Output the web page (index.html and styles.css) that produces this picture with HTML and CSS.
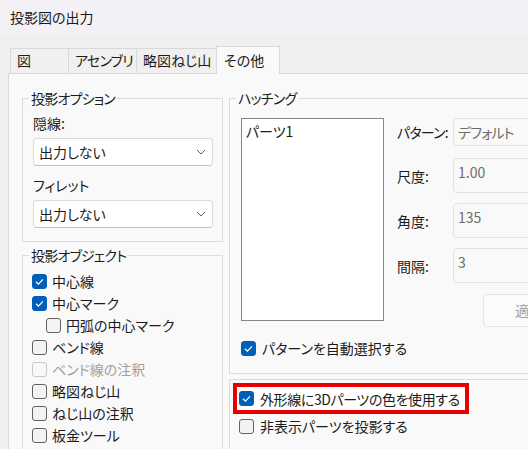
FILE: index.html
```html
<!DOCTYPE html>
<html lang="ja">
<head>
<meta charset="utf-8">
<title>投影図の出力</title>
<link rel="stylesheet" href="styles.css">
</head>
<body>
<div class="titlebar">投影図の出力</div>
<div class="tabs">
  <div class="tab t1">図</div>
  <div class="tab t2 kana">アセンブリ</div>
  <div class="tab t3">略図ねじ山</div>
  <div class="tab active">その他</div>
</div>
<div class="panel">
  <div class="col-left">
    <fieldset class="group g-opts">
      <legend class="kana">投影オプション</legend>
      <div class="label">隠線:</div>
      <div class="select"><span>出力しない</span><svg class="chev" width="10" height="6" viewBox="0 0 10 6"><path d="M1 1 L5 5 L9 1" fill="none" stroke="#5f5f5f" stroke-width="1"/></svg></div>
      <div class="label lbl2">フィレット</div>
      <div class="select"><span>出力しない</span><svg class="chev" width="10" height="6" viewBox="0 0 10 6"><path d="M1 1 L5 5 L9 1" fill="none" stroke="#5f5f5f" stroke-width="1"/></svg></div>
    </fieldset>
    <fieldset class="group g-objs">
      <legend class="kana">投影オブジェクト</legend>
      <div class="cb checked"><span class="box"><svg width="13" height="13" viewBox="0 0 13 13"><polyline points="3,6.8 5.4,9.1 10,4.4" fill="none" stroke="#fff" stroke-width="1.3"/></svg></span><span>中心線</span></div>
      <div class="cb checked"><span class="box"><svg width="13" height="13" viewBox="0 0 13 13"><polyline points="3,6.8 5.4,9.1 10,4.4" fill="none" stroke="#fff" stroke-width="1.3"/></svg></span><span>中心マーク</span></div>
      <div class="cb indent"><span class="box"></span><span>円弧の中心マーク</span></div>
      <div class="cb"><span class="box"></span><span>ベンド線</span></div>
      <div class="cb disabled"><span class="box"></span><span>ベンド線の注釈</span></div>
      <div class="cb"><span class="box"></span><span>略図ねじ山</span></div>
      <div class="cb"><span class="box"></span><span>ねじ山の注釈</span></div>
      <div class="cb"><span class="box"></span><span>板金ツール</span></div>
    </fieldset>
  </div>
  <div class="col-right">
    <fieldset class="group g-hatch">
      <legend class="kana">ハッチング</legend>
      <div class="hatch-body">
        <div class="listbox"><div>パーツ1</div></div>
        <div class="form">
          <div class="frow"><div class="flabel kana">パターン:</div><div class="combo kana">デフォルト</div></div>
          <div class="frow r2"><div class="flabel">尺度:</div><div class="edit">1.00</div></div>
          <div class="frow r3"><div class="flabel">角度:</div><div class="edit">135</div></div>
          <div class="frow r3"><div class="flabel">間隔:</div><div class="edit">3</div></div>
          <div class="btnrow"><div class="btn">適用</div></div>
        </div>
      </div>
      <div class="cb checked auto"><span class="box"><svg width="13" height="13" viewBox="0 0 13 13"><polyline points="3,6.8 5.4,9.1 10,4.4" fill="none" stroke="#fff" stroke-width="1.3"/></svg></span><span>パターンを自動選択する</span></div>
    </fieldset>
    <fieldset class="group g-misc">
      <div class="highlight">
        <div class="cb checked"><span class="box"><svg width="13" height="13" viewBox="0 0 13 13"><polyline points="3,6.8 5.4,9.1 10,4.4" fill="none" stroke="#fff" stroke-width="1.3"/></svg></span><span class="tight">外形線に3Dパーツの色を使用する</span></div>
      </div>
      <div class="cb plain"><span class="box"></span><span>非表示パーツを投影する</span></div>
    </fieldset>
  </div>
</div>
</body>
</html>
```
FILE: styles.css
```css
* { box-sizing: border-box; }
html, body { margin: 0; padding: 0; }
body {
  width: 528px;
  height: 449px;
  overflow: hidden;
  background: #f0f0f0;
  font-family: "Noto Sans CJK JP", "Noto Sans", sans-serif;
  font-size: 14px;
  line-height: 18px;
  color: #1b1b1b;
  font-feature-settings: "palt";
}
.kana { letter-spacing: -0.8px; }
.tight { letter-spacing: -0.4px; }
.titlebar {
  height: 35px;
  line-height: 35px;
  padding-left: 10px;
  background: #f3f1f6;
}
.tabs {
  display: flex;
  align-items: flex-end;
  height: 27px;
  margin-top: 11px;
  padding-left: 10px;
}
.tab {
  height: 25px;
  border: 1px solid #d9d9d9;
  border-bottom: none;
  background: #f0f0f0;
  padding-left: 6px;
  line-height: 23px;
  margin-left: -1px;
  white-space: nowrap;
}
.tab:first-child { margin-left: 0; }
.t1 { width: 59px; }
.t2 { width: 69px; }
.t3 { width: 81px; }
.tab.active {
  width: 64px;
  height: 28px;
  margin-bottom: -1px;
  background: #f9f9f9;
  position: relative;
  z-index: 1;
  padding-left: 7px;
  line-height: 26px;
}
.panel {
  margin-left: 8px;
  border-top: 1px solid #d9d9d9;
  border-left: 1px solid #d9d9d9;
  background: #f9f9f9;
  height: 376px;
  overflow: hidden;
  display: flex;
  align-items: flex-start;
  padding: 15px 0 0 13px;
  gap: 6px;
}
.group {
  margin: 0;
  border: 1px solid #dcdcdc;
  padding: 0;
  min-width: 0;
}
.group legend {
  padding: 0 2px;
  line-height: 18px;
}
.col-left {
  width: 201px;
  flex: none;
  display: flex;
  flex-direction: column;
}
.g-opts { padding: 0 9px 13px 10px; }
.g-opts legend { margin-left: -4px; }
.label { margin-top: 7px; }
.lbl2 { margin-top: 10px; }
.select {
  margin-top: 6px;
  height: 28px;
  width: 180px;
  background: #fff;
  border: 1px solid #dadada;
  border-bottom-color: #c2c2c2;
  border-radius: 4px;
  display: flex;
  align-items: center;
  justify-content: space-between;
  padding: 0 6px 0 5px;
}
.g-objs {
  margin-top: 4px;
  padding: 6px 0 0 9px;
  height: 230px;
}
.g-objs legend { margin-left: -3px; }
.cb {
  display: flex;
  align-items: center;
  height: 22px;
  gap: 5px;
  white-space: nowrap;
}
.box {
  width: 15px;
  height: 15px;
  border: 1px solid #616161;
  border-radius: 3px;
  background: #f3f3f3;
  flex: none;
  display: flex;
}
.checked .box {
  background: #005fb8;
  border-color: #005fb8;
}
.disabled { color: #a0a0a0; }
.disabled .box { border-color: #c8c8c8; background: #f9f9f9; }
.indent { padding-left: 14px; }
.col-right { width: 340px; flex: none; }
.g-hatch { padding: 11px 0 14px 11px; }
.g-hatch legend { margin-left: -5px; }
.hatch-body { display: flex; align-items: flex-start; }
.listbox {
  width: 143px;
  height: 203px;
  background: #fff;
  border: 1px solid #868686;
  padding: 3px 4px;
  flex: none;
}
.form {
  margin-left: 13px;
  display: flex;
  flex-direction: column;
}
.frow { display: flex; align-items: center; }
.flabel { width: 56px; flex: none; }
.combo {
  width: 120px;
  height: 28px;
  border: 1px solid #e3e3e3;
  border-radius: 4px;
  background: #f9f9f9;
  color: #6d6d6d;
  padding-left: 4px;
  line-height: 26px;
}
.edit {
  width: 120px;
  height: 35px;
  border: 1px solid #e3e3e3;
  border-radius: 4px;
  padding: 4px 0 0 4px;
  color: #6d6d6d;
}
.r2 { margin-top: 12px; }
.r3 { margin-top: 10px; }
.btnrow { margin-top: 11px; padding-left: 86px; }
.btn {
  width: 92px;
  height: 33px;
  border: 1px solid #e5e5e5;
  border-radius: 4px;
  background: #fbfbfb;
  color: #a0a0a0;
  text-align: center;
  line-height: 31px;
}
.auto { margin-top: 10px; gap: 6px; }
.g-misc {
  margin-top: 5px;
  padding: 3px 0 0 3px;
  height: 100px;
}
.highlight {
  width: max-content;
  border: 4px solid #e60000;
  background: #ffffff;
  padding: 0 5px 0 2px;
}
.highlight .cb { height: 23px; gap: 6px; }
.plain { margin-top: 1px; padding-left: 6px; gap: 6px; }
```
